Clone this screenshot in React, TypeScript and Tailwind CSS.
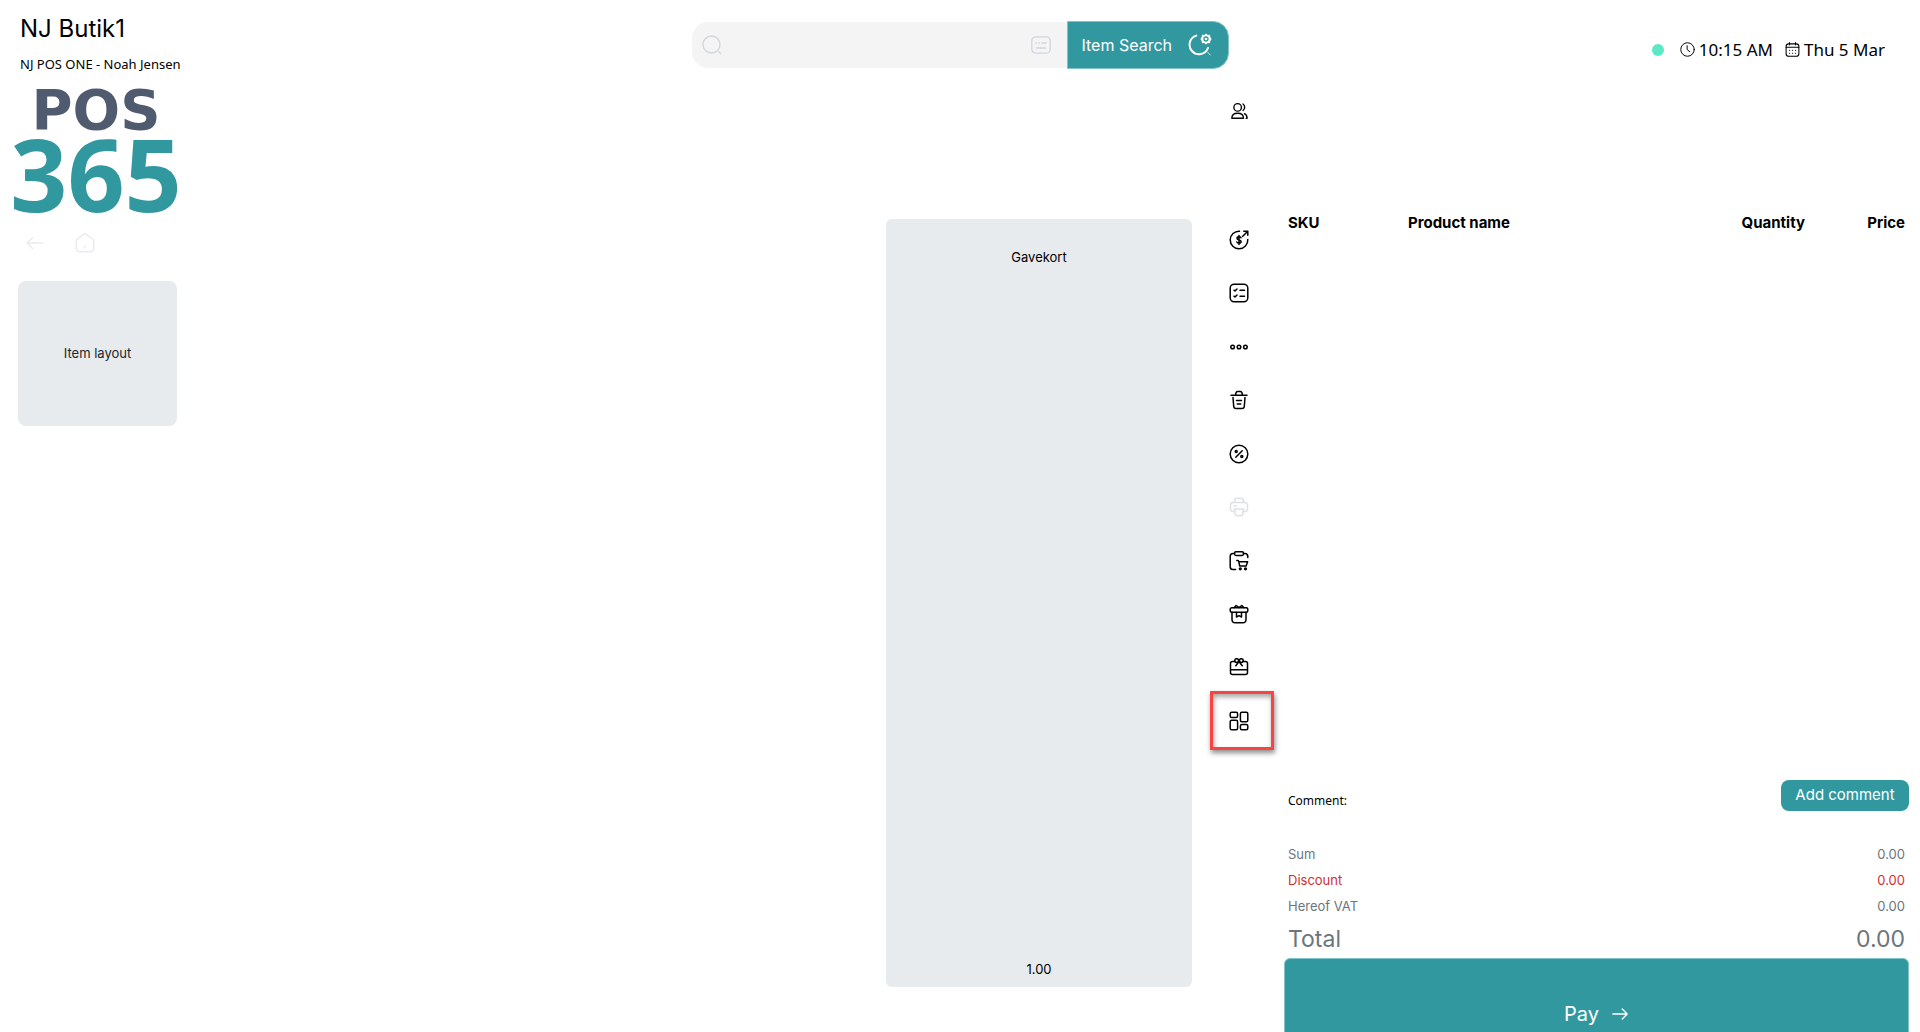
import type { ReactNode } from "react";

function Icon({ size = 20, stroke = 1.5, children }: { size?: number; stroke?: number; children: ReactNode }) {
  return (
    <svg
      width={size}
      height={size}
      viewBox="0 0 20 20"
      fill="none"
      stroke="currentColor"
      strokeWidth={stroke}
      strokeLinecap="round"
      strokeLinejoin="round"
      aria-hidden="true"
    >
      {children}
    </svg>
  );
}

const tools = [
  {
    name: "Currency",
    icon: (
      <>
        <path d="M10.5 1.2A8.8 8.8 0 1 0 18.8 9.5M13.500 6.500l5-5M14.8 1.2h4v4" />
        <path d="M12 7.8c-.4-.7-1.100-1-2-1-1.200 0-2 .6-2 1.500 0 2.200 4.100 1 4.100 3.300 0 1-.9 1.600-2.100 1.600-1 0-1.800-.4-2.200-1.200M10 5.600v8.800" />
      </>
    ),
  },
  {
    name: "Orders",
    icon: (
      <>
        <rect x="1.200" y="1.200" width="17.600" height="17.600" rx="4" />
        <path d="M5 7.200l1 .8 2-2M5 13.200l1 .8 2-2M11 7.200h4.500M11 13.200h4.500" />
      </>
    ),
  },
  {
    name: "More",
    icon: (
      <>
        <circle cx="3.600" cy="10" r="1.800" />
        <circle cx="10" cy="10" r="1.800" />
        <circle cx="16.400" cy="10" r="1.800" />
      </>
    ),
  },
  {
    name: "Delete",
    icon: (
      <>
        <path d="M2 5.300h16M6.500 5c.3-2 .8-3.500 2-3.500h3c1.200 0 1.700 1.500 2 3.500M4 7.500l.7 8.700c.1 1.600.8 2.300 2.300 2.300h6c1.500 0 2.200-.7 2.300-2.300L16 7.500M7.500 10.500h5M8.300 14h3.400" />
      </>
    ),
  },
  {
    name: "Discount",
    icon: (
      <>
        <circle cx="10" cy="10" r="8.800" />
        <path d="M6.800 13.200l6.400-6.400" />
        <circle cx="7.200" cy="7.500" r="1" />
        <circle cx="12.800" cy="12.500" r="1" />
      </>
    ),
  },
  {
    name: "Print",
    disabled: true,
    icon: (
      <>
        <path d="M5.500 5.500V4c0-1.800 1-2.800 2.800-2.800h3.400c1.800 0 2.800 1 2.800 2.800v1.500M5.500 14.500H4.200c-1.800 0-2.700-1-2.700-2.700V8.300c0-1.800.9-2.800 2.700-2.800h11.600c1.800 0 2.700 1 2.700 2.800v3.500c0 1.700-.9 2.700-2.700 2.700h-1.300M5 12h10M6 12v4c0 1.900.9 2.800 2.800 2.800h2.400c1.900 0 2.800-.9 2.800-2.800v-4M5 9h2.500" />
      </>
    ),
  },
  {
    name: "Park order",
    icon: (
      <>
        <rect x="5.500" y=".8" width="9" height="3.600" rx="1.400" />
        <path d="M5.500 2.600H4C2.200 2.600 1.200 3.600 1.200 5.400v10.400c0 1.800 1 2.800 2.800 2.800h2.500M14.500 2.600H16c1.800 0 2.700 1 2.800 2.800v1" />
        <path d="M7.800 9.500h1c.5 0 .8.300.9.800l1 4.700h6.400l1.500-4.300H9.800" />
        <circle cx="11.300" cy="17.800" r=".9" />
        <circle cx="16.500" cy="17.800" r=".9" />
      </>
    ),
  },
  {
    name: "Gift card",
    icon: (
      <>
        <rect x="1.200" y="3.800" width="17.600" height="4.400" rx="1.500" />
        <path d="M3 8.200v7.300c0 2.300.9 3.300 3.200 3.300h7.600c2.300 0 3.200-1 3.200-3.300V8.200M7.500 8.500v4.500l2.500-1.300 2.500 1.300V8.500M5.200 3.600l2-2.100L10 3.600l2.800-2.100 2 2.100" />
      </>
    ),
  },
  {
    name: "Vouchers",
    icon: (
      <>
        <path d="M6 3.500H3.500c-1.200 0-2 .8-2 2v9c0 1.200.8 2 2 2h13c1.200 0 2-.8 2-2v-9c0-1.200-.8-2-2-2H14M1.500 11.800h17" />
        <circle cx="7.700" cy="2.600" r="1.900" />
        <circle cx="12.300" cy="2.600" r="1.900" />
        <path d="M10 3.500L6.800 7.800M10 3.500l3.200 4.300" />
      </>
    ),
  },
  {
    name: "Layout",
    marked: true,
    icon: (
      <>
        <rect x="1.200" y="1.200" width="7.400" height="5.400" rx="1.500" />
        <rect x="1.200" y="9.200" width="7.400" height="9.600" rx="1.500" />
        <rect x="11.400" y="1.200" width="7.400" height="9.600" rx="1.500" />
        <rect x="11.400" y="13.400" width="7.400" height="5.400" rx="1.500" />
      </>
    ),
  },
];

const sums = [
  { label: "Sum", value: "0.00", color: "text-[#6c757d]" },
  { label: "Discount", value: "0.00", color: "text-[#d32f2f]" },
  { label: "Hereof VAT", value: "0.00", color: "text-[#6c757d]" },
];

function Header() {
  return (
    <header className="grid h-20 shrink-0 grid-cols-[1fr_537px_1fr]">
      <div className="pl-5 pt-[13px]">
        <h1 className="text-2xl leading-8">NJ Butik1</h1>
        <p className="mt-[9px] font-['Noto_Sans',sans-serif] text-[13px] leading-5">NJ POS ONE - Noah Jensen</p>
      </div>
      <form className="mt-[21px] flex h-12 items-center">
        <label className="flex h-[46px] flex-1 items-center gap-3 rounded-l-2xl bg-[#f4f4f4] pl-2.5 pr-4 text-[#d0d5dc]">
          <Icon stroke={1.3}>
            <circle cx="9.500" cy="9.500" r="8.500" />
            <path d="M16.800 16.800l2 2" />
          </Icon>
          <input aria-label="Search" className="min-w-0 flex-1 bg-transparent text-black outline-none" />
          <Icon stroke={1.3}>
            <rect x=".8" y="1.800" width="18.400" height="16.400" rx="4" />
            <path d="M5 8h.5M8 8h.5M11 8h4M5.500 13h9" />
          </Icon>
        </label>
        <button
          type="button"
          className="flex h-12 w-[162px] items-center gap-4 rounded-r-2xl border border-[#7fc4c8] bg-[#3298a0] pl-3.5 text-white"
        >
          Item Search
          <svg width="24" height="24" viewBox="0 0 24 24" fill="none" stroke="currentColor" aria-hidden="true">
            <path d="M8.300 2.600A9.500 9.500 0 1 0 20 15" strokeWidth="2" strokeLinecap="round" />
            <path d="M20 19.500l2.200 2.500" strokeWidth=".8" strokeLinecap="round" />
            <path
              d="M18 .6l1.700 1.300 2.300-.2.300 2.200 1.300 2.100-1.300 2.100-.3 2.200-2.300-.2L18 11.400l-1.700-1.300-2.300.2-.3-2.200L12.400 6l1.300-2.100.3-2.200 2.300.2z"
              fill="currentColor"
              stroke="none"
            />
            <circle cx="18" cy="6" r="2" stroke="#3298a0" strokeWidth="1.300" />
          </svg>
        </button>
      </form>
      <div className="flex items-center justify-end pr-[35px] pt-[19px] font-['Noto_Sans',sans-serif] text-[17px]">
        <span className="mr-4 size-3 rounded-full bg-[#5ce8c5]" />
        <Icon size={15} stroke={1.3}>
          <circle cx="10" cy="10" r="9" />
          <path d="M9.500 5v5l3.500 3" />
        </Icon>
        <time className="ml-1 mr-3">10:15 AM</time>
        <Icon size={15} stroke={1.4}>
          <rect x="1.500" y="2.500" width="17" height="16.500" rx="3.500" />
          <path d="M6 .8v3M14 .8v3M1.500 7h17M6 11h.2M10 11h.2M14 11h.2M6 15h.2M10 15h.2M14 15h.2" />
        </Icon>
        <time className="ml-1">Thu 5 Mar</time>
      </div>
    </header>
  );
}

function Sidebar() {
  return (
    <aside className="ml-[14px] w-[164px]">
      <svg width="164" height="140" viewBox="0 0 164 140" className="overflow-visible" role="img" aria-label="POS 365">
        <text x="82" y="49" textAnchor="middle" fill="#505b6f" className="font-['DejaVu_Sans',sans-serif] text-[56px] font-bold">
          POS
        </text>
        <text x="82" y="132" textAnchor="middle" fill="#3298a0" className="font-['Open_Sans',sans-serif] text-[100px] font-bold">
          365
        </text>
      </svg>
      <nav className="mt-2 flex h-[30px] items-center gap-[30px] pl-[11px] text-[#e9ecef]">
        <button type="button" aria-label="Back">
          <Icon>
            <path d="M18 10H2M7.500 4.500L2 10l5.500 5.500" />
          </Icon>
        </button>
        <button type="button" aria-label="Home">
          <Icon>
            <path d="M1.200 8.500c0-1.200.3-1.800 1.200-2.500l5.800-4.300c1.200-.9 2.400-.9 3.600 0L17.600 6c.9.700 1.200 1.300 1.200 2.500v6.300c0 2.700-1.300 4-4 4H5.200c-2.700 0-4-1.300-4-4zM10 13v2" />
          </Icon>
        </button>
      </nav>
      <button type="button" className="ml-1 mt-[23px] h-[145px] w-[159px] rounded-lg bg-[#e7ebee] text-[13px] text-[#212529]">
        Item layout
      </button>
    </aside>
  );
}

function Toolbar() {
  return (
    <div className="ml-[17px] flex w-[60px] flex-col">
      <button type="button" aria-label="Customers" className="flex h-[62px] items-center justify-center">
        <Icon size={18} stroke={1.5}>
          <circle cx="8.500" cy="6" r="4.200" />
          <path d="M14.500 2.200a4.500 4.500 0 0 1 0 7.200M2 18c0-3.500 2.500-5.500 6.500-5.500S15 14.500 15 18zM16 13c1.900.8 3 2.400 3 5h-1" />
        </Icon>
      </button>
      <div className="mt-[71px] flex h-[535px] flex-col">
        {tools.map((tool) => (
          <button
            key={tool.name}
            type="button"
            aria-label={tool.name}
            disabled={tool.disabled}
            className="relative flex flex-1 items-center justify-center disabled:text-[#dee2e6]"
          >
            <Icon>{tool.icon}</Icon>
            {tool.marked && (
              <span className="absolute -bottom-0.5 -right-[5px] -top-1 left-px border-[3px] border-[#fa4343] shadow-[1px_3px_5px_rgba(0,0,0,0.45),inset_1px_3px_5px_rgba(0,0,0,0.35)]" />
            )}
          </button>
        ))}
      </div>
    </div>
  );
}

function Receipt() {
  return (
    <section className="-mb-[38px] ml-[15px] mr-[11px] flex w-[625px] flex-col pt-[133px]">
      <table className="w-full text-left text-[15px] leading-5">
        <thead>
          <tr>
            <th className="w-[120px] pl-1 font-bold">SKU</th>
            <th className="pl-1 font-bold">Product name</th>
            <th className="w-[100px] text-right font-bold">Quantity</th>
            <th className="w-[104px] pr-1 text-right font-bold">Price</th>
          </tr>
        </thead>
        <tbody />
      </table>
      <div className="mt-auto flex h-[31px] justify-between">
        <p className="pl-1 pt-[11px] font-['Noto_Sans',sans-serif] text-xs leading-5">Comment:</p>
        <button type="button" className="h-[31px] w-[128px] rounded-lg bg-[#3298a0] text-[15px] text-white">
          Add comment
        </button>
      </div>
      <dl className="mt-[31px] pl-1 pr-1">
        {sums.map((row) => (
          <div key={row.label} className={`flex h-[26px] items-center justify-between text-[13px] ${row.color}`}>
            <dt>{row.label}</dt>
            <dd>{row.value}</dd>
          </div>
        ))}
        <div className="flex h-[38px] items-center justify-between text-[23px] text-[#6c757d]">
          <dt>Total</dt>
          <dd>0.00</dd>
        </div>
      </dl>
      <button
        type="button"
        className="flex h-28 shrink-0 items-center justify-center gap-3 rounded-md border border-[#7fc4c8] bg-[#3298a0] text-xl text-white"
      >
        Pay
        <Icon size={18}>
          <path d="M2 10h16M12.500 4.500L18 10l-5.500 5.500" />
        </Icon>
      </button>
    </section>
  );
}

export default function App() {
  return (
    <div className="flex h-screen flex-col overflow-hidden bg-white font-['Inter',sans-serif] text-black">
      <Header />
      <main className="flex min-h-0 flex-1">
        <Sidebar />
        <button
          type="button"
          className="mb-[45px] ml-auto mt-[139px] flex w-[306px] flex-col items-center justify-between rounded-md bg-[#e7ebee] pb-2 pt-7 text-[13px] leading-5"
        >
          <span>Gavekort</span>
          <span>1.00</span>
        </button>
        <Toolbar />
        <Receipt />
      </main>
    </div>
  );
}
